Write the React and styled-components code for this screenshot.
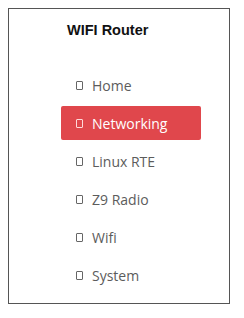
import React from "react";
import styled, { createGlobalStyle } from "styled-components";

const Global = createGlobalStyle`
  body {
    margin: 8px;
    background: #fff;
  }
`;

const Panel = styled.div`
  box-sizing: border-box;
  width: 222px;
  height: 296px;
  border: 1px solid #555;
  padding: 11px 0 0 52px;
`;

const Title = styled.div`
  font-family: "Liberation Sans", Arial, sans-serif;
  font-weight: bold;
  font-size: 14.5px;
  line-height: 20px;
  color: #111;
  padding-left: 6px;
  margin-bottom: 28px;
`;

const Menu = styled.div`
  display: flex;
  flex-direction: column;
  gap: 4px;
  width: 140px;
`;

const Item = styled.div`
  display: flex;
  align-items: center;
  gap: 9px;
  height: 34px;
  padding-left: 15px;
  border-radius: 2px;
  font-family: "Open Sans", "Noto Sans", sans-serif;
  font-size: 14px;
  color: ${(p) => (p.active ? "#fff" : "#5c5c5c")};
  background: ${(p) => (p.active ? "#e0474c" : "transparent")};
`;

const Box = styled.span`
  box-sizing: border-box;
  flex: none;
  width: 7px;
  height: 9px;
  margin-top: 1px;
  border: 1px solid ${(p) => (p.active ? "#ffd9d9" : "#666")};
  border-radius: 1px;
`;

const items = ["Home", "Networking", "Linux RTE", "Z9 Radio", "Wifi", "System"];

export default function App() {
  return (
    <>
      <Global />
      <Panel>
        <Title>WIFI Router</Title>
        <Menu>
          {items.map((name) => (
            <Item key={name} active={name === "Networking"}>
              <Box active={name === "Networking"} />
              {name}
            </Item>
          ))}
        </Menu>
      </Panel>
    </>
  );
}
